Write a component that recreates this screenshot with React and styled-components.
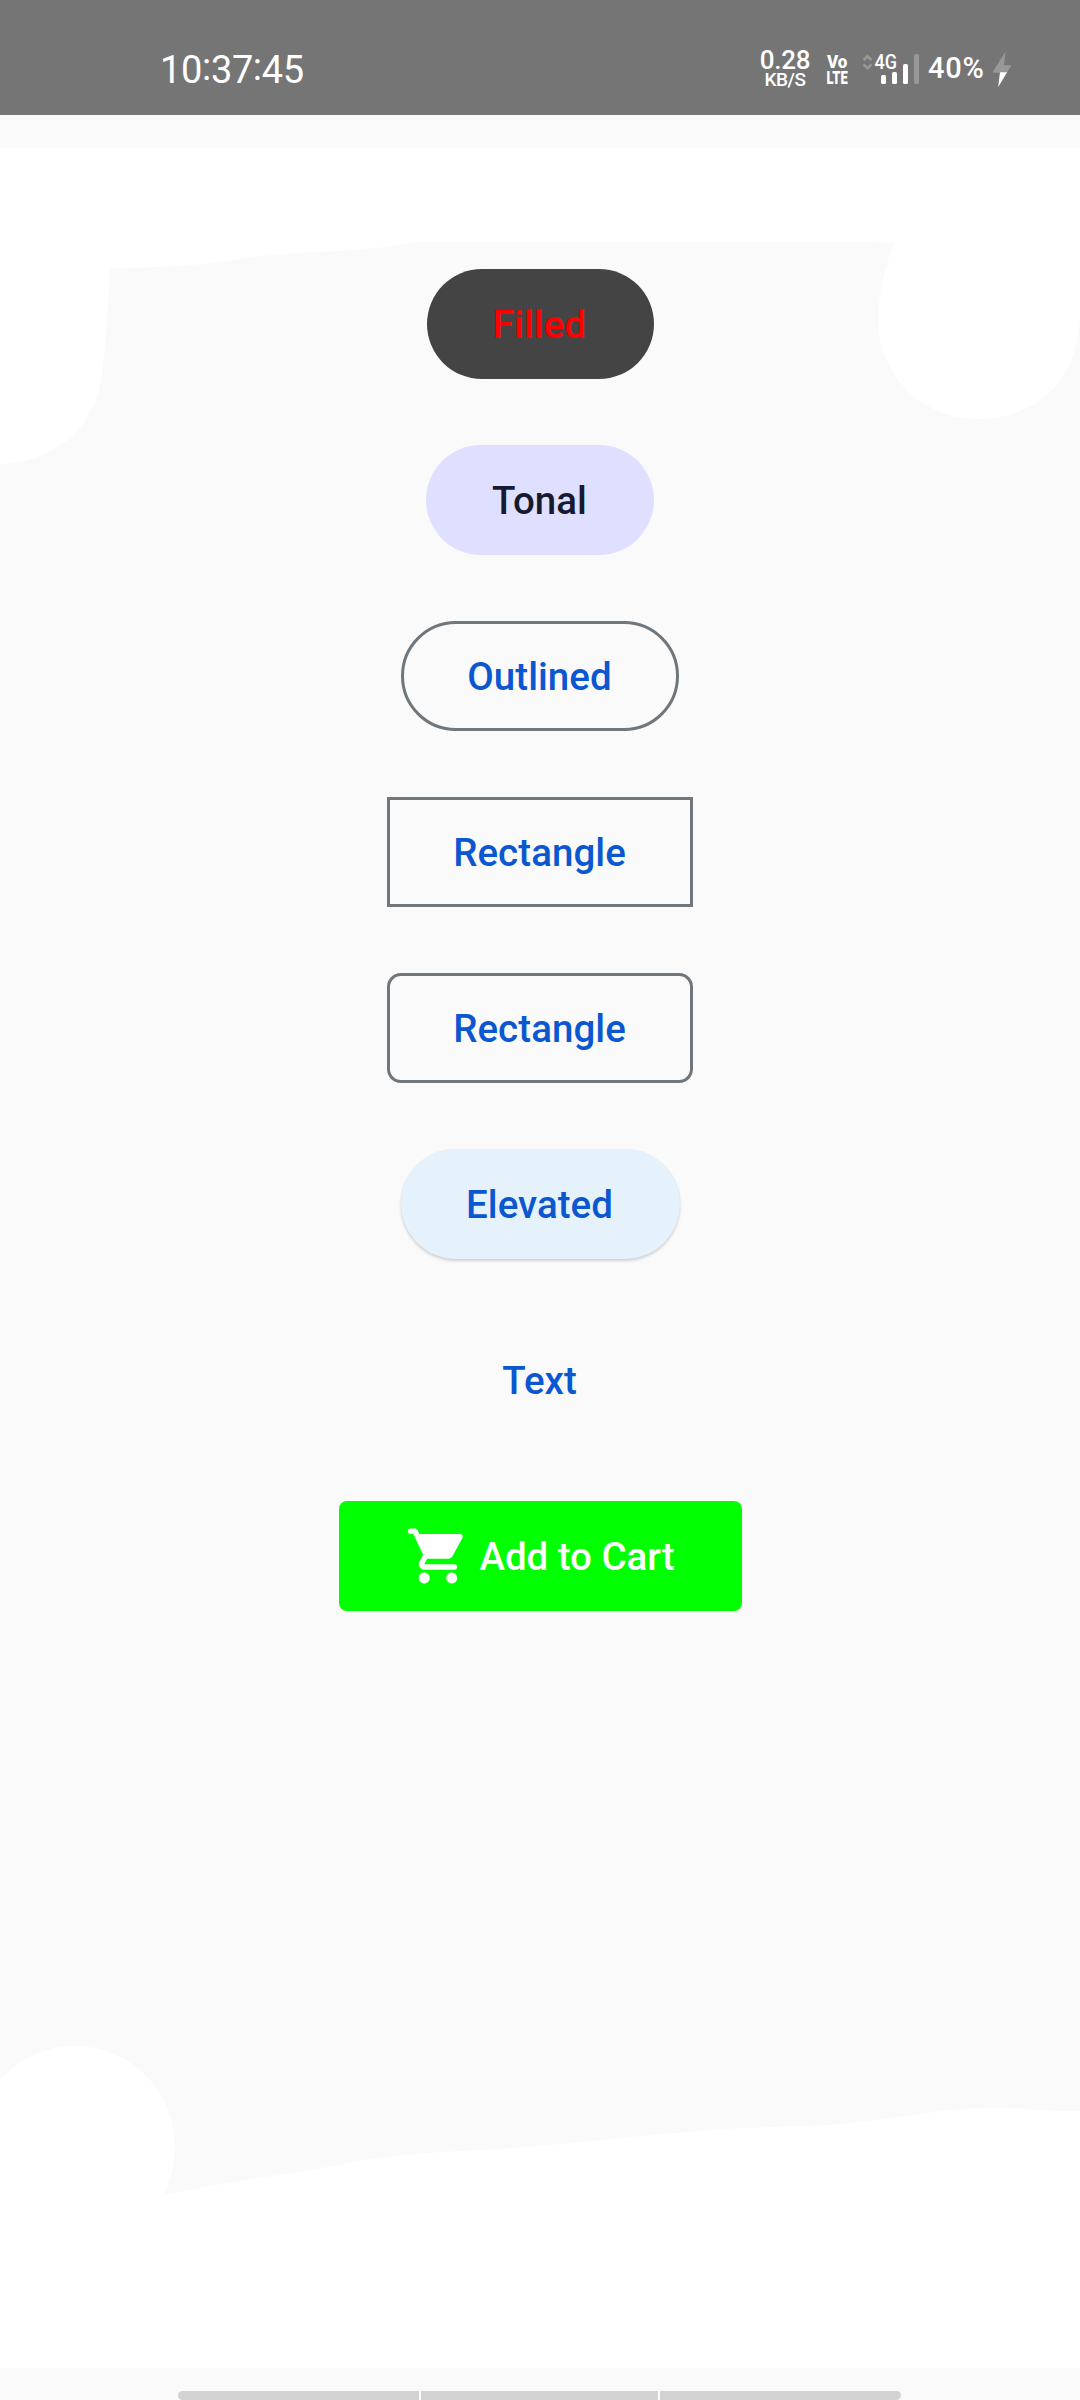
import React from "react";
import styled, { createGlobalStyle, css } from "styled-components";

const GlobalStyle = createGlobalStyle`
  * { box-sizing: border-box; }
  body { margin: 0; background: #fafafa; font-family: Roboto, "Liberation Sans", sans-serif; }
`;

const Screen = styled.div`
  position: relative;
  isolation: isolate;
  display: flex;
  flex-direction: column;
  width: 1080px;
  height: 2400px;
  overflow: hidden;
  background: #fafafa;
`;

const Backdrop = styled.svg`
  position: absolute;
  top: 0;
  left: 0;
  z-index: -1;
`;

const StatusBar = styled.header`
  display: flex;
  justify-content: space-between;
  height: 115px;
  padding: 47px 68px 0 160px;
  background: #757575;
  color: #fff;
`;

const Clock = styled.time`
  display: flex;
  padding-top: 1px;
  font-size: 38px;
  line-height: 44px;
  letter-spacing: -0.4px;
`;

const Colon = styled.span`
  width: 9px;
  margin-top: -3px;
`;

const StatusIcons = styled.div`
  display: flex;
  align-items: flex-start;
`;

const Stack = styled.div`
  display: flex;
  flex-direction: column;
  align-items: center;
  width: ${(p) => p.$width}px;
  margin-right: ${(p) => p.$gap}px;
  padding-top: ${(p) => p.$top ?? 0}px;
  white-space: nowrap;
`;

const Speed = styled.span`
  font-size: 26px;
  font-weight: 500;
  line-height: 26px;
  letter-spacing: -0.2px;
`;

const SpeedUnit = styled.span`
  margin-top: -3px;
  font-size: 19px;
  font-weight: 500;
  line-height: 19px;
  letter-spacing: -0.5px;
`;

const VolteLine = styled.span`
  font-size: 18.5px;
  font-weight: 900;
  line-height: 16px;
  transform: scaleX(${(p) => p.$squeeze});
`;

const Signal = styled.div`
  display: flex;
  width: 58px;
  height: 40px;
  margin-right: 8px;
`;

const Battery = styled.span`
  width: 60px;
  margin-right: 4px;
  font-size: 29px;
  font-weight: 500;
  line-height: 42px;
  letter-spacing: 0.8px;
  white-space: nowrap;
`;

const ButtonList = styled.main`
  flex: 1;
  display: flex;
  flex-direction: column;
  align-items: center;
  gap: 66px;
  padding-top: 154px;
`;

const looks = {
  filled: css`
    background: #444;
    color: #f00;
  `,
  tonal: css`
    background: #dfe0ff;
    color: #171a2f;
  `,
  outlined: css`
    border: 3px solid #6f777c;
  `,
  elevated: css`
    background: #e5f2fc;
    box-shadow: 0 2px 3px rgba(0, 0, 0, 0.16), 0 0 1px rgba(0, 0, 0, 0.08);
  `,
  text: css``,
  cart: css`
    background: #0f0;
    color: #fff;
    letter-spacing: -0.05px;
  `,
};

const Button = styled.button`
  display: flex;
  align-items: center;
  justify-content: center;
  gap: 9px;
  flex: none;
  width: ${(p) => p.$width}px;
  height: 110px;
  padding: 0;
  border: 0;
  border-radius: ${(p) => p.$radius ?? 55}px;
  background: transparent;
  color: #0b57d0;
  font-family: inherit;
  font-size: 38.5px;
  font-weight: 500;
  line-height: 46px;
  letter-spacing: 0.05px;
  white-space: nowrap;
  ${(p) => looks[p.$look]}
`;

const Label = styled.span`
  padding: 2px 1px 0 0;
`;

const CartIcon = styled.svg`
  flex: none;
  width: 66px;
  height: 66px;
  fill: currentColor;
`;

const NavBar = styled.footer`
  display: flex;
  gap: 2px;
  height: 9px;
  padding-left: 178px;
`;

const NavSegment = styled.div`
  width: ${(p) => p.$width}px;
  background: #d2d2d2;
  border-radius: ${(p) => p.$corners ?? "0"};
`;

const buttons = [
  { label: "Filled", look: "filled", width: 227 },
  { label: "Tonal", look: "tonal", width: 228 },
  { label: "Outlined", look: "outlined", width: 278 },
  { label: "Rectangle", look: "outlined", width: 306, radius: 0 },
  { label: "Rectangle", look: "outlined", width: 306, radius: 14 },
  { label: "Elevated", look: "elevated", width: 279 },
  { label: "Text", look: "text", width: 140 },
  { label: "Add to Cart", look: "cart", width: 403, radius: 8 },
];

function Waves() {
  return (
    <Backdrop width="1080" height="2400" viewBox="0 0 1080 2400" fill="#fff">
      <path d="M0 148H1080V320C1079 330 1077 341 1075 348C1066 390 1026 419 978 419C922 419 878 375 878 318C879 290 886 264 894 243L870 242H417C398 245 381 248 362 249C344 251 330 252 310 252C288 254 266 255 245 258C200 266 155 268 109 268C109 300 106 340 102 373C98 424 56 463 0 464Z" />
      <path d="M0 2080C19 2059 46 2046 75 2046C130 2046 175 2091 175 2146C175 2164 171 2181 162 2196C205 2186 250 2179 293 2173C325 2168 350 2162 379 2158C432 2151 486 2151 540 2146C590 2142 640 2135 690 2132C738 2127 785 2127 829 2125C868 2122 907 2115 943 2111C975 2107 1000 2107 1025 2109C1044 2111 1062 2111 1080 2111V2368H0Z" />
    </Backdrop>
  );
}

function SignalIcon() {
  return (
    <svg width="58" height="40" viewBox="862 47 58 40">
      <g fill="none" stroke="#989898" strokeWidth="2.6">
        <path d="M863.5 60l4-3.8 4 3.8M863.5 64.5l4 3.8 4-3.8" />
      </g>
      <text x="874.5" y="69" fill="#fff" fontFamily="Roboto, sans-serif" fontSize="20" fontWeight="500" textLength="22.5" lengthAdjust="spacingAndGlyphs">4G</text>
      <g fill="#fff">
        <rect x="881" y="75" width="5" height="9" rx="1.5" />
        <rect x="892" y="72" width="5" height="12" rx="1.5" />
        <rect x="903" y="64" width="5" height="20" rx="1.5" />
        <rect x="914" y="54" width="5" height="30" rx="1.5" fill="#989898" />
      </g>
    </svg>
  );
}

function BoltIcon() {
  return (
    <svg width="20" height="42" viewBox="991.5 47 20 42">
      <path d="M1005 51.5L992 72.5H999.5L997.7 87L1011 65.3H1003.5Z" fill="#989898" />
      <path d="M992 72.5H999.5L997.7 87L1006.5 72.2Z" fill="#fff" />
    </svg>
  );
}

export default function App() {
  return (
    <>
      <GlobalStyle />
      <Screen>
        <Waves />
        <StatusBar>
          <Clock>
            10<Colon>:</Colon>37<Colon>:</Colon>45
          </Clock>
          <StatusIcons>
            <Stack $width={50} $gap={15}>
              <Speed>0.28</Speed>
              <SpeedUnit>KB/S</SpeedUnit>
            </Stack>
            <Stack $width={24} $gap={13} $top={7}>
              <VolteLine $squeeze={0.92}>Vo</VolteLine>
              <VolteLine $squeeze={0.7}>LTE</VolteLine>
            </Stack>
            <Signal>
              <SignalIcon />
            </Signal>
            <Battery>40%</Battery>
            <BoltIcon />
          </StatusIcons>
        </StatusBar>
        <ButtonList>
          {buttons.map((b, i) => (
            <Button key={i} $look={b.look} $width={b.width} $radius={b.radius}>
              {b.look === "cart" && (
                <CartIcon viewBox="0 0 24 24">
                  <path d="M7 18c-1.1 0-1.99.9-1.99 2S5.9 22 7 22s2-.9 2-2-.9-2-2-2zM1 3c0 .55.45 1 1 1h1l3.6 7.59-1.35 2.44C4.52 15.37 5.48 17 7 17h11c.55 0 1-.45 1-1s-.45-1-1-1H7l1.1-2h7.45c.75 0 1.41-.41 1.75-1.03l3.58-6.49c.37-.66-.11-1.48-.87-1.48H5.21l-.67-1.43c-.16-.35-.52-.57-.9-.57H2c-.55 0-1 .45-1 1zm16 15c-1.1 0-1.99.9-1.99 2s.89 2 1.99 2 2-.9 2-2-.9-2-2-2z" />
                </CartIcon>
              )}
              <Label>{b.label}</Label>
            </Button>
          ))}
        </ButtonList>
        <NavBar>
          <NavSegment $width={241} $corners="5px 0 0 5px" />
          <NavSegment $width={237} />
          <NavSegment $width={241} $corners="0 5px 5px 0" />
        </NavBar>
      </Screen>
    </>
  );
}
